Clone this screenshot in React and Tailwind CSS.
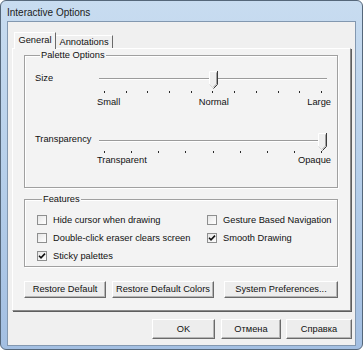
import React, { useState } from "react";

function Thumb() {
  return (
    <svg width="9" height="18" viewBox="0 0 9 18">
      <path d="M0.5 0.5H8.5V13.5L4.5 17.5L0.5 13.5Z" fill="#efefef" />
      <path d="M0.5 13.5V0.5H8" fill="none" stroke="#ffffff" />
      <path d="M0.5 13.5L4.5 17.5" fill="none" stroke="#d8d8d8" />
      <path d="M8.5 0V13.5L4.5 17.5" fill="none" stroke="#3c3c3c" />
      <path d="M7.5 1.5V13L4.5 16" fill="none" stroke="#a3a3a3" />
    </svg>
  );
}

function Slider({ label, count, value, labels, tickGap, labelGap, labelPad }) {
  const width = 228;
  const pad = 5;
  const left = pad + (value / (count - 1)) * (width - pad * 2) - 4;

  return (
    <div className="flex">
      <div className={`w-[64px] leading-[11px] ${labelPad}`}>{label}</div>
      <div className="w-[228px]">
        <div className="relative h-[18px] pt-[7px]">
          <div className="h-[2px] border-t border-t-[#9b9b9b] border-b border-b-white" />
          <div className="absolute top-0 leading-none" style={{ left }}>
            <Thumb />
          </div>
        </div>
        <div className={`flex justify-between px-[5px] ${tickGap}`}>
          {Array.from({ length: count }).map((_, i) => (
            <div key={i} className="h-[2px] w-px bg-[#2a2a2a]" />
          ))}
        </div>
        <div className={`ml-[-2px] mr-[-4px] flex justify-between leading-[11px] ${labelGap}`}>
          {labels.map((l) => (
            <span key={l}>{l}</span>
          ))}
        </div>
      </div>
    </div>
  );
}

function Check({ label, checked, onToggle }) {
  return (
    <label className="flex h-[16px] cursor-default items-center gap-[6px] leading-[11px]" onClick={onToggle}>
      <span className="flex h-[10px] w-[10px] items-center justify-center border border-[#8e8f8f] bg-gradient-to-br from-[#e6e6e6] to-white">
        {checked && (
          <svg width="8" height="8" viewBox="0 0 8 8">
            <path d="M1 3.8L3 5.8L7 1.6" fill="none" stroke="#111" strokeWidth="1.6" />
          </svg>
        )}
      </span>
      <span>{label}</span>
    </label>
  );
}

function Btn({ children, w, h = "h-[17px]" }) {
  return (
    <button
      className={`${w} ${h} border border-t-white border-l-white border-r-[#6a6a6a] border-b-[#6a6a6a] bg-[#ededed] text-center leading-[11px] text-[#111] shadow-[inset_-1px_-1px_0_#b5b5b5]`}
    >
      {children}
    </button>
  );
}

function GroupBox({ title, className, children }) {
  return (
    <fieldset
      className={`border border-[#a0a0a0] shadow-[inset_1px_1px_0_#ffffff,1px_1px_0_#ffffff] ${className}`}
    >
      <legend className="ml-[5px] bg-[#f3f3f3] px-[1px] leading-[11px]">{title}</legend>
      {children}
    </fieldset>
  );
}

export default function App() {
  const [checks, setChecks] = useState({
    hide: false,
    dbl: false,
    sticky: true,
    gesture: false,
    smooth: true,
  });
  const toggle = (k) => setChecks({ ...checks, [k]: !checks[k] });

  return (
    <div className="h-[350px] w-[363px] font-['Liberation_Sans',Arial,sans-serif] text-[9.3px] text-[#111]">
      <div className="flex h-[350px] w-[363px] flex-col rounded-[6px] border border-[#55677a] bg-gradient-to-b from-[#c8dcf0] via-[#b6cfea] to-[#a3bfe2]">
        <div className="h-[20px] pl-[6px] pt-[6px] text-[10px] leading-[12px] text-[#1b1b1b]">
          Interactive Options
        </div>

        <div className="mx-[6px] h-[325px] border border-[#8398b0] bg-[#f0f0f0]">
          <div className="ml-[4px] pt-[10px]">
            <div className="flex h-[16px] items-end pl-[2px]">
              <div className="relative z-10 -mb-px flex h-[17px] w-[42px] items-center justify-center border-l border-t border-r border-l-white border-t-white border-r-[#6a6a6a] bg-[#f3f3f3] pb-[2px] leading-[11px]">
                General
              </div>
              <div className="flex h-[13px] w-[57px] items-center justify-center border-t border-r border-t-white border-r-[#6a6a6a] pt-[1px] leading-[11px]">
                Annotations
              </div>
            </div>

            <div className="w-[339px] border border-t-white border-l-white border-r-[#8a8a8a] border-b-[#8a8a8a] bg-[#f3f3f3] pb-[12px] pl-[11px] pr-[12px] pt-[1px] shadow-[1px_1px_0_#5e5e5e]">
              <GroupBox title="Palette Options" className="pb-[21px] pl-[10px] pt-[10px]">
                <Slider
                  label="Size"
                  count={11}
                  value={5}
                  labels={["Small", "Normal", "Large"]}
                  tickGap="mt-[2px]"
                  labelGap="mt-[4px]"
                  labelPad="pt-[2px]"
                />
                <div className="mt-[25px]">
                  <Slider
                    label="Transparency"
                    count={9}
                    value={8}
                    labels={["Transparent", "Opaque"]}
                    tickGap="mt-0"
                    labelGap="mt-[2px]"
                    labelPad="pt-[1px]"
                  />
                </div>
              </GroupBox>

              <GroupBox title="Features" className="mt-[6px] pb-[2px] pl-[12px] pt-[7px]">
                <div className="grid grid-cols-[170px_1fr] gap-y-[2px]">
                  <Check label="Hide cursor when drawing" checked={checks.hide} onToggle={() => toggle("hide")} />
                  <Check label="Gesture Based Navigation" checked={checks.gesture} onToggle={() => toggle("gesture")} />
                  <Check label="Double-click eraser clears screen" checked={checks.dbl} onToggle={() => toggle("dbl")} />
                  <Check label="Smooth Drawing" checked={checks.smooth} onToggle={() => toggle("smooth")} />
                  <Check label="Sticky palettes" checked={checks.sticky} onToggle={() => toggle("sticky")} />
                </div>
              </GroupBox>

              <div className="mt-[14px] flex">
                <Btn w="w-[83px]">Restore Default</Btn>
                <div className="ml-[6px]">
                  <Btn w="w-[102px]">Restore Default Colors</Btn>
                </div>
                <div className="ml-[10px]">
                  <Btn w="w-[114px]">System Preferences...</Btn>
                </div>
              </div>
            </div>
          </div>

          <div className="mt-[8px] flex justify-end gap-[5px] pr-[3px]">
            <Btn w="w-[63px]" h="h-[20px]">OK</Btn>
            <div className="ml-px">
              <Btn w="w-[60px]" h="h-[20px]">Отмена</Btn>
            </div>
            <Btn w="w-[66px]" h="h-[20px]">Справка</Btn>
          </div>
        </div>
      </div>
    </div>
  );
}
